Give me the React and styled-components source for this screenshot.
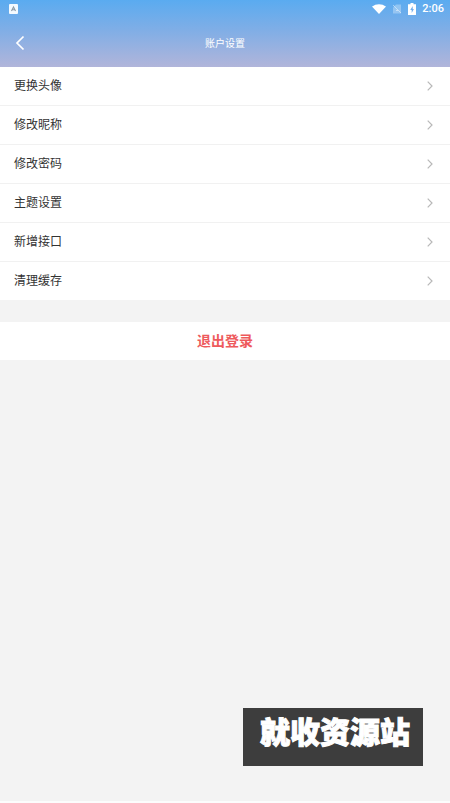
import React from 'react';
import styled, { createGlobalStyle } from 'styled-components';

const GlobalStyle = createGlobalStyle`
  * {
    box-sizing: border-box;
  }
  body {
    margin: 0;
    background-color: #f3f3f3;
    font-family: Roboto, 'Noto Sans CJK SC', sans-serif;
  }
  button {
    font-family: inherit;
    border: none;
    padding: 0;
    margin: 0;
    background: none;
    cursor: pointer;
  }
`;

const Screen = styled.div`
  position: relative;
  min-height: 100vh;
  background-color: #f3f3f3;
  border-bottom: 2px solid #fcfcfc;
`;

const Header = styled.header`
  background: linear-gradient(#5aabf0, #80aee6 45%, #b1b5da);
`;

const StatusBar = styled.div`
  display: flex;
  align-items: center;
  justify-content: space-between;
  height: 18px;
  padding: 0 6px 0 9px;
  color: white;
`;

const StatusIcons = styled.div`
  display: flex;
  align-items: center;
  gap: 6px;
`;

const Clock = styled.span`
  font-size: 11px;
  font-weight: 500;
  line-height: 18px;
`;

const NavBar = styled.div`
  display: grid;
  grid-template-columns: 40px 1fr 40px;
  align-items: center;
  height: 49px;
`;

const BackButton = styled.button`
  display: flex;
  align-items: center;
  height: 48px;
  padding-left: 15px;
  color: white;
`;

const Title = styled.h1`
  margin: 0;
  padding-top: 2px;
  color: white;
  font-size: 10px;
  font-weight: 400;
  line-height: 16px;
  text-align: center;
`;

const List = styled.ul`
  margin: 0;
  padding: 0;
  list-style: none;
  background-color: white;
`;

const ListItem = styled.li`
  & + & {
    border-top: 1px solid #f1f1f1;
  }
`;

const Row = styled.button`
  display: flex;
  align-items: center;
  justify-content: space-between;
  width: 100%;
  height: 38px;
  padding: 0 17px 0 14px;
  color: #333333;
  font-size: 12px;
  font-weight: 400;
  line-height: 16px;
  text-align: left;
`;

const LogoutButton = styled.button`
  && {
    display: block;
    width: 100%;
    height: 38px;
    margin-top: 22px;
    background-color: white;
    color: #ee5a5c;
    font-size: 14px;
    font-weight: 700;
    line-height: 16px;
  }
`;

const SiteBadge = styled.div`
  position: absolute;
  right: 27px;
  bottom: 35px;
  height: 58px;
  padding: 0 13px 0 17px;
  background-color: #3d3d3d;
  color: white;
  font-size: 30px;
  font-weight: 900;
  line-height: 50px;
  -webkit-text-stroke: 1px white;
`;

const items = ['更换头像', '修改昵称', '修改密码', '主题设置', '新增接口', '清理缓存'];

const KeyboardIcon = () => (
  <svg width="9" height="10" viewBox="0 0 9 10" aria-hidden="true">
    <rect width="9" height="10" rx="1" fill="#f4faff" />
    <path d="M2.5 7 4.5 3 6.5 7M3.3 5.8h2.4" fill="none" stroke="#8c9aa6" strokeWidth="1.1" />
  </svg>
);

const WifiIcon = () => (
  <svg width="14" height="10" viewBox="0 0 14 10" aria-hidden="true">
    <path d="M0 2.6C4-.7 10-.7 14 2.6L7 10Z" fill="white" />
  </svg>
);

const NoSimIcon = () => (
  <svg width="10" height="10" viewBox="0 0 10 10" aria-hidden="true">
    <path d="M4 .5h5v9H1v-6Z" fill="white" fillOpacity="0.3" />
    <path d="M1 1 9 9M4 6.5h2" stroke="white" strokeOpacity="0.45" strokeWidth="1" />
  </svg>
);

const BatteryIcon = () => (
  <svg width="8" height="12" viewBox="0 0 8 12" aria-hidden="true">
    <path d="M2.5 0h3v1.2H8V12H0V1.2h2.5Z" fill="white" />
    <path d="M4.7 3 2.3 7h1.4v3l2.2-4H4.7Z" fill="#6facec" />
  </svg>
);

const BackIcon = () => (
  <svg width="10" height="16" viewBox="0 0 10 16" aria-hidden="true">
    <path d="M8.5 1.5 2 8l6.5 6.5" fill="none" stroke="currentColor" strokeWidth="1.7" />
  </svg>
);

const ChevronIcon = () => (
  <svg width="6" height="10" viewBox="0 0 6 10" aria-hidden="true">
    <path d="M.7.7 5 5 .7 9.3" fill="none" stroke="#b8b8b8" strokeWidth="1.2" />
  </svg>
);

const App = () => {
  return (
    <>
      <GlobalStyle />
      <Screen>
        <Header>
          <StatusBar>
            <KeyboardIcon />
            <StatusIcons>
              <WifiIcon />
              <NoSimIcon />
              <BatteryIcon />
              <Clock>2:06</Clock>
            </StatusIcons>
          </StatusBar>
          <NavBar>
            <BackButton type="button" aria-label="返回">
              <BackIcon />
            </BackButton>
            <Title>账户设置</Title>
          </NavBar>
        </Header>
        <main>
          <List>
            {items.map((item) => (
              <ListItem key={item}>
                <Row type="button">
                  {item}
                  <ChevronIcon />
                </Row>
              </ListItem>
            ))}
          </List>
          <LogoutButton type="button">退出登录</LogoutButton>
        </main>
        <SiteBadge>就收资源站</SiteBadge>
      </Screen>
    </>
  );
};

export default App;
